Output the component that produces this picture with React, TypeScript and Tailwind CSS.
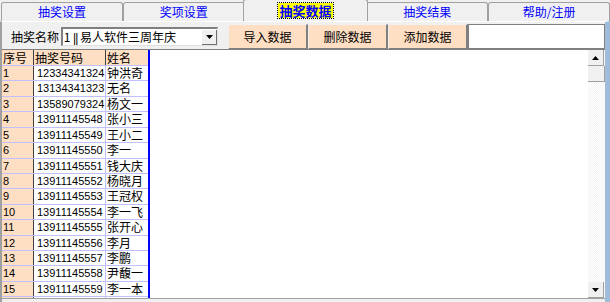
import React from 'react';

const rows: [string, string, string][] = [
  ['1', '12334341324', '钟洪奇'],
  ['2', '13134341323', '无名'],
  ['3', '13589079324', '杨文一'],
  ['4', '13911145548', '张小三'],
  ['5', '13911145549', '王小二'],
  ['6', '13911145550', '李一'],
  ['7', '13911145551', '钱大庆'],
  ['8', '13911145552', '杨晓月'],
  ['9', '13911145553', '王冠权'],
  ['10', '13911145554', '李一飞'],
  ['11', '13911145555', '张开心'],
  ['12', '13911145556', '李月'],
  ['13', '13911145557', '李鹏'],
  ['14', '13911145558', '尹馥一'],
  ['15', '13911145559', '李一本'],
  ['16', '13911145560', '王蒂'],
];

const tabs = ['抽奖设置', '奖项设置', '抽奖数据', '抽奖结果', '帮助/注册'];

const cjk = "font-['SimSun','Noto_Sans_CJK_SC',sans-serif]";
const num = "font-['Liberation_Sans','Noto_Sans_CJK_SC',sans-serif]";

function Tab({ label, active }: { label: string; active: boolean }) {
  if (active) {
    return (
      <div className="relative z-10 -mx-[2px] w-[126px] h-[22px] bg-[#f0f0f0] border border-b-0 border-[#a0a0a0] rounded-t-[3px] flex items-center justify-center">
        <span className="text-[13px] leading-[15px] font-bold text-[#0000ff] outline-dotted outline-1 outline-black bg-[#ffff00] px-[1px]">
          {label}
        </span>
      </div>
    );
  }
  return (
    <div className="mt-[2px] w-[122px] h-[19px] bg-[#f0f0f0] border border-b-0 border-[#a0a0a0] rounded-t-[3px] flex items-center justify-center">
      <span className="text-[12px] leading-[14px] text-[#0000ff]">{label}</span>
    </div>
  );
}

function Btn({ label }: { label: string }) {
  return (
    <div className="w-[80px] h-[26px] bg-[#ffdfc3] border-r-2 border-b-2 border-[#808080] border-t border-l border-t-[#f0f0f0] border-l-[#f0f0f0] flex items-center justify-center text-[12px]">
      {label}
    </div>
  );
}

function Arrow({ up }: { up: boolean }) {
  return (
    <div className="w-[16px] h-[16px] bg-[#f0f0f0] border-r border-b border-[#a0a0a0] flex items-center justify-center">
      <svg width="7" height="4" viewBox="0 0 7 4">
        {up ? <path d="M3.5 0 L7 4 L0 4 Z" fill="#000" /> : <path d="M0 0 L7 0 L3.5 4 Z" fill="#000" />}
      </svg>
    </div>
  );
}

export default function App() {
  return (
    <div className={`w-[610px] h-[302px] bg-[#f0f0f0] overflow-hidden text-black ${cjk}`}>
      <div className="flex h-[21px] items-end pl-[1px]">
        {tabs.map((t, i) => (
          <Tab key={t} label={t} active={i === 2} />
        ))}
      </div>

      <div className="h-[281px] border-l-2 border-[#a0a0a0] border-r-[5px] border-r-[#9fbcd8] border-t border-t-[#ffffff] flex flex-col">
        <div className="h-[27px] flex items-center pl-[9px] pt-[2px]">
          <span className="text-[12px] w-[50px]">抽奖名称</span>
          <div className="w-[158px] h-[19px] bg-white border-t-2 border-l-2 border-[#808080] border-b border-r border-b-[#e0e0e0] border-r-[#e0e0e0] flex items-center justify-between">
            <span className="text-[12px] pl-[1px] leading-none">
              1 <span className={`${num} tracking-[-1px]`}>||</span> 易人软件三周年庆
            </span>
            <div className="w-[15px] h-[15px] bg-[#f0f0f0] border-r border-b border-[#707070] flex items-center justify-center">
              <svg width="7" height="4" viewBox="0 0 7 4">
                <path d="M0 0 L7 0 L3.5 4 Z" fill="#000" />
              </svg>
            </div>
          </div>
          <div className="ml-[10px] flex self-stretch items-stretch">
            <Btn label="导入数据" />
            <Btn label="删除数据" />
            <Btn label="添加数据" />
            <div className="w-[137px] bg-white border border-[#808080]" />
          </div>
        </div>

        <div className="flex-1 flex border-t border-[#808080] bg-white min-h-0 overflow-hidden">
          <div className="flex-1 min-w-0 overflow-hidden">
            <div className="w-[148px] border-r-2 border-[#0000ff]">
              <div className="flex h-[15px] bg-[#ffdfc3] text-[12px] leading-[15px]">
                <div className="w-[32px] border-r border-[#404040] pl-[1px]">序号</div>
                <div className="w-[72px] border-r border-[#404040] pl-[1px]">抽奖号码</div>
                <div className="flex-1 pl-[1px]">姓名</div>
              </div>
              {rows.map((r) => (
                <div key={r[0]} className="flex h-[15.43px] border-t border-[#c0c0ff] text-[12px] leading-[14px]">
                  <div className={`w-[32px] bg-[#ffdfc3] border-r border-[#404040] pl-[1px] ${num} text-[11px]`}>{r[0]}</div>
                  <div className={`w-[72px] border-r border-[#c0c0ff] pl-[3px] ${num} text-[11px]`}>{r[1]}</div>
                  <div className="flex-1 pl-[1px]">{r[2]}</div>
                </div>
              ))}
            </div>
          </div>
          <div className="w-[17px] flex flex-col bg-[repeating-conic-gradient(#f4f4f4_0_25%,#ffffff_0_50%)] bg-[length:2px_2px]">
            <Arrow up />
            <div className="h-[16px] bg-[#f0f0f0] border-r border-b border-[#a0a0a0]" />
            <div className="flex-1" />
            <Arrow up={false} />
          </div>
        </div>
        <div className="h-[4px] bg-[#f0f0f0] border-t border-[#a0a0a0]" />
      </div>
    </div>
  );
}
